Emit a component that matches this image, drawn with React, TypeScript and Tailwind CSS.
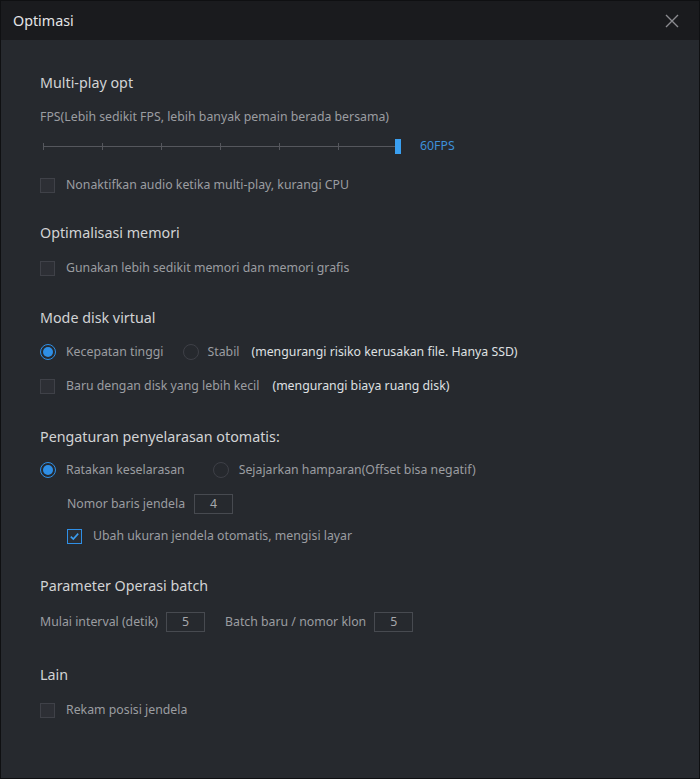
import React from "react";

const font = { fontFamily: '"Noto Sans", "Open Sans", Arial, sans-serif' };

function Heading({ children, className = "" }: { children: React.ReactNode; className?: string }) {
  return (
    <div className={["flex h-[20px] items-center text-[14.3px] text-[#d2d3d5]", className].join(" ")}>
      {children}
    </div>
  );
}

function Checkbox({ checked = false }: { checked?: boolean }) {
  return (
    <span
      className={[
        "flex h-[15px] w-[15px] shrink-0 items-center justify-center border",
        checked ? "border-[#2f8fe6] bg-[#2a2d33]" : "border-[#3f4148] bg-[#2d2f35]",
      ].join(" ")}
    >
      {checked ? (
        <svg width="11" height="11" viewBox="0 0 11 11" fill="none">
          <path d="M1.8 5.6 L4.3 8.1 L9.2 2.6" stroke="#3a9cf0" strokeWidth="1.6" />
        </svg>
      ) : null}
    </span>
  );
}

function Radio({ checked = false }: { checked?: boolean }) {
  return checked ? (
    <span className="flex h-[16px] w-[16px] shrink-0 items-center justify-center rounded-full border-[1.5px] border-[#2f8fe6]">
      <span className="block h-[10px] w-[10px] rounded-full bg-[#2f8fe6]" />
    </span>
  ) : (
    <span className="block h-[16px] w-[16px] shrink-0 rounded-full border border-[#3e4047]" />
  );
}

function Box({ value }: { value: string }) {
  return (
    <span className="flex h-[20px] w-[39px] items-center justify-center border border-[#474a50] text-[12.3px] text-[#a6a8ac]">
      {value}
    </span>
  );
}

function CheckRow({
  label,
  extra,
  checked,
  className = "",
}: {
  label: string;
  extra?: string;
  checked?: boolean;
  className?: string;
}) {
  return (
    <div className={["flex h-[20px] items-center text-[12.3px] text-[#9b9da1]", className].join(" ")}>
      <Checkbox checked={checked} />
      <span className="ml-[11px]">{label}</span>
      {extra ? <span className="ml-[13px] text-[#dfe0e2]">{extra}</span> : null}
    </div>
  );
}

function FpsSlider() {
  const ticks = [0, 59, 118, 177, 236, 295];
  return (
    <div className="flex h-[20px] items-center">
      <div className="relative ml-[3px] h-[20px] w-[358px]">
        <div className="absolute left-0 right-0 top-[10px] h-px bg-[#55575d]" />
        {ticks.map((t) => (
          <div
            key={t}
            className="absolute top-[7px] h-[7px] w-px bg-[#55575d]"
            style={{ left: t }}
          />
        ))}
        <div className="absolute right-0 top-[3px] h-[15px] w-[6px] bg-[#3a9ff0]" />
      </div>
      <span className="ml-[19px] text-[12.3px] text-[#3d90da]">60FPS</span>
    </div>
  );
}

export default function App() {
  return (
    <div className="h-[779px] w-[700px] bg-[#0f1012] p-px" style={font}>
      <div className="flex h-full flex-col bg-[#26292e]">
        <div className="flex h-[39px] shrink-0 items-center justify-between bg-[#1a1b1e] pl-[12px] pr-[20px]">
          <span className="text-[14.3px] text-[#e4e5e7]">Optimasi</span>
          <svg width="14" height="14" viewBox="0 0 14 14" fill="none">
            <path d="M1 1 L13 13 M13 1 L1 13" stroke="#8b8c90" strokeWidth="1.4" />
          </svg>
        </div>

        <div className="pl-[39px]">
          <Heading className="mt-[33px]">Multi-play opt</Heading>
          <div className="mt-[14px] flex h-[20px] items-center text-[12.3px] text-[#9b9da1]">
            FPS(Lebih sedikit FPS, lebih banyak pemain berada bersama)
          </div>
          <div className="mt-[9px]">
            <FpsSlider />
          </div>
          <CheckRow className="mt-[19px]" label="Nonaktifkan audio ketika multi-play, kurangi CPU" />

          <Heading className="mt-[28px]">Optimalisasi memori</Heading>
          <CheckRow className="mt-[15px]" label="Gunakan lebih sedikit memori dan memori grafis" />

          <Heading className="mt-[30px]">Mode disk virtual</Heading>
          <div className="mt-[14px] flex h-[20px] items-center text-[12.3px] text-[#9b9da1]">
            <Radio checked />
            <span className="ml-[10px]">Kecepatan tinggi</span>
            <span className="ml-[19px]">
              <Radio />
            </span>
            <span className="ml-[9px]">Stabil</span>
            <span className="ml-[12px] text-[#dfe0e2]">(mengurangi risiko kerusakan file. Hanya SSD)</span>
          </div>
          <CheckRow
            className="mt-[14px]"
            label="Baru dengan disk yang lebih kecil"
            extra="(mengurangi biaya ruang disk)"
          />

          <Heading className="mt-[31px]">Pengaturan penyelarasan otomatis:</Heading>
          <div className="mt-[13px] flex h-[20px] items-center text-[12.3px] text-[#9b9da1]">
            <Radio checked />
            <span className="ml-[10px]">Ratakan keselarasan</span>
            <span className="ml-[28px]">
              <Radio />
            </span>
            <span className="ml-[10px]">Sejajarkan hamparan(Offset bisa negatif)</span>
          </div>
          <div className="mt-[14px] flex h-[20px] items-center pl-[27px] text-[12.3px] text-[#9b9da1]">
            <span>Nomor baris jendela</span>
            <span className="ml-[9px]">
              <Box value="4" />
            </span>
          </div>
          <CheckRow
            className="mt-[12px] pl-[27px]"
            checked
            label="Ubah ukuran jendela otomatis, mengisi layar"
          />

          <Heading className="mt-[30px]">Parameter Operasi batch</Heading>
          <div className="mt-[16px] flex h-[20px] items-center text-[12.3px] text-[#9b9da1]">
            <span>Mulai interval (detik)</span>
            <span className="ml-[8px]">
              <Box value="5" />
            </span>
            <span className="ml-[20px]">Batch baru / nomor klon</span>
            <span className="ml-[8px]">
              <Box value="5" />
            </span>
          </div>

          <Heading className="mt-[33px]">Lain</Heading>
          <CheckRow className="mt-[15px]" label="Rekam posisi jendela" />
        </div>
      </div>
    </div>
  );
}
